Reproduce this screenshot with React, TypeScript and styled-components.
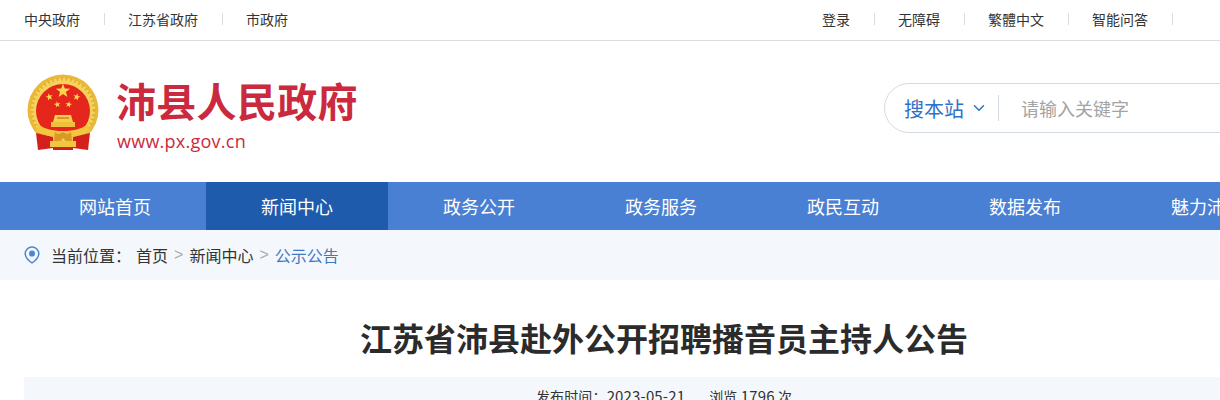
import React from 'react';
import styled, { createGlobalStyle } from 'styled-components';
import { ChevronDown } from 'lucide-react';

const GlobalStyle = createGlobalStyle`
  html, body {
    margin: 0;
    padding: 0;
    width: 1220px;
    height: 400px;
    overflow: hidden;
    background: #fff;
    font-family: "Noto Sans CJK SC", "Liberation Sans", sans-serif;
    color: #333;
  }
`;

const Page = styled.div`
  width: 1328px;
`;

const TopBar = styled.div`
  display: flex;
  justify-content: space-between;
  align-items: center;
  box-sizing: border-box;
  width: 1220px;
  height: 41px;
  padding: 0 47px 2px 24px;
  border-bottom: 1px solid #d9dce0;
`;

const TopLinks = styled.div`
  display: flex;
  align-items: center;
`;

const TopLink = styled.a<{ $divided?: boolean }>`
  display: flex;
  align-items: center;
  font-size: 14px;
  line-height: 20px;
  color: #333;
  &::after {
    content: '';
    width: 1px;
    height: 12px;
    margin: 0 23px 0 24px;
    background: ${(props) => (props.$divided ? '#d9dce0' : 'transparent')};
  }
  &:last-child::after {
    margin-right: 0;
  }
`;

const Masthead = styled.header`
  display: flex;
  justify-content: space-between;
  align-items: center;
  box-sizing: border-box;
  width: 1280px;
  margin-left: 24px;
  height: 141px;
`;

const Brand = styled.div`
  display: flex;
  align-items: center;
  gap: 17px;
  padding-left: 3px;
`;

const EmblemSvg = styled.svg`
  filter: blur(0.35px);
`;

const BrandText = styled.div`
  display: flex;
  flex-direction: column;
  padding-top: 5px;
  color: #cb2a3e;
`;

const BrandName = styled.div`
  font-size: 40px;
  font-weight: 700;
  line-height: 50px;
  letter-spacing: 0.3px;
`;

const BrandUrl = styled.div`
  margin: 3px 0 0 1px;
  font-family: "Open Sans", sans-serif;
  font-size: 18px;
  line-height: 26px;
  letter-spacing: 0.25px;
`;

const SearchBox = styled.form`
  display: flex;
  align-items: center;
  box-sizing: border-box;
  width: 420px;
  height: 50px;
  margin-top: -7px;
  padding-left: 19px;
  border: 1px solid #d5dbe3;
  border-radius: 25px;
`;

const SearchScope = styled.div`
  display: flex;
  align-items: center;
  gap: 6px;
  height: 26px;
  padding-right: 10px;
  border-right: 1px solid #d5dbe3;
  font-size: 20px;
  color: #2f72c8;
`;

const SearchInput = styled.input`
  flex: 1;
  min-width: 0;
  margin-left: 22px;
  padding: 0;
  border: 0;
  outline: 0;
  background: transparent;
  font: 18px "Noto Sans CJK SC", sans-serif;
  &::placeholder {
    color: #a3a3a3;
    opacity: 1;
  }
`;

const Nav = styled.nav`
  display: flex;
  box-sizing: border-box;
  width: 1328px;
  height: 48px;
  padding-left: 24px;
  background: #4a80d3;
`;

const NavItem = styled.a<{ $active?: boolean }>`
  flex: 0 0 182px;
  text-align: center;
  font-size: 18px;
  line-height: 48px;
  color: #fff;
  background: ${(props) => (props.$active ? '#1f5bac' : 'transparent')};
`;

const Crumbs = styled.div`
  display: flex;
  align-items: center;
  box-sizing: border-box;
  width: 1328px;
  height: 50px;
  padding-left: 24px;
  background: #f4f8fc;
  font-size: 16px;
`;

const CrumbLabel = styled.span`
  margin: 0 5px 0 11px;
`;

const CrumbSep = styled.span`
  margin: 0 6px;
  color: #a9a9a9;
  font-family: "Liberation Sans", sans-serif;
`;

const CrumbCurrent = styled.span`
  color: #3f79c4;
`;

const Article = styled.main`
  width: 1280px;
  margin-left: 24px;
`;

const Title = styled.h1`
  margin: 0;
  padding-top: 33px;
  text-align: center;
  font-size: 32px;
  font-weight: 700;
  line-height: 48px;
  color: #2b2b2b;
`;

const Meta = styled.div`
  display: flex;
  justify-content: center;
  gap: 24px;
  height: 50px;
  margin-top: 16px;
  padding-top: 9px;
  background: #f4f8fc;
  font-size: 14px;
  line-height: 20px;
  letter-spacing: 0.15px;
`;

const MetaNum = styled.span`
  font-size: 15px;
`;

// 国徽
const Emblem = () => {
  const star = (cx: number, cy: number, r: number, rot = 0) => {
    const pts = [];
    for (let i = 0; i < 10; i++) {
      const rad = i % 2 === 0 ? r : r * 0.4;
      const a = ((i * 36 - 90 + rot) * Math.PI) / 180;
      pts.push(`${(cx + rad * Math.cos(a)).toFixed(2)},${(cy + rad * Math.sin(a)).toFixed(2)}`);
    }
    return <polygon points={pts.join(' ')} fill="#fbd84a" />;
  };
  return (
    <EmblemSvg width="72" height="78" viewBox="0 0 72 78">
      <circle cx="36" cy="37" r="35.5" fill="#e9b93a" />
      <circle cx="36" cy="37" r="32" fill="#f5d25a" />
      <circle cx="36" cy="37" r="31" fill="none" stroke="#e2a92e" strokeWidth="3" strokeDasharray="1.5 3" />
      <circle cx="36" cy="38" r="27" fill="#e4261c" />
      {star(36, 18, 7.5)}
      {star(22.3, 24, 3.8, -15)}
      {star(49.7, 24, 3.8, 15)}
      {star(30.3, 31.5, 3.4, -10)}
      {star(41.7, 31.5, 3.4, 10)}
      <path d="M9 60 L26 64 L26 75 L11 77 Z" fill="#d4201c" />
      <path d="M63 60 L46 64 L46 75 L61 77 Z" fill="#d4201c" />
      <path d="M28 42h16l2 7h-20z" fill="#f4cd4d" />
      <rect x="30" y="44" width="12" height="2" fill="#d9962a" />
      <rect x="24" y="49" width="24" height="5" fill="#efbf3e" />
      <path d="M11 51 C19 57 27 58 36 58 C45 58 53 57 61 51 L63 58 C54 63 45 64 36 64 C27 64 18 63 9 58 Z" fill="#f3c63f" />
      <path d="M28 59 C31 62 33 61 36 59 C39 61 41 62 44 59 L45 68 C41 69 38 68 36 65 C34 68 31 69 27 68 Z" fill="#d99a24" />
      <rect x="23" y="68" width="26" height="6" fill="#f3c63f" />
      <rect x="26" y="74" width="20" height="3" fill="#d4201c" />
    </EmblemSvg>
  );
};

const PinIcon = () => (
  <svg width="16" height="18" viewBox="0 0 16 18" fill="none">
    <path
      d="M8 1C4.2 1 1.2 4 1.2 7.6 1.2 11.4 5 15 8 17 11 15 14.8 11.4 14.8 7.6 14.8 4 11.8 1 8 1Z"
      stroke="#4f86d0"
      strokeWidth="1.5"
    />
    <circle cx="8" cy="7.6" r="3" fill="#4f86d0" />
  </svg>
);

const navItems = ['网站首页', '新闻中心', '政务公开', '政务服务', '政民互动', '数据发布', '魅力沛县'];

const App = () => {
  return (
    <Page>
      <GlobalStyle />
      <TopBar>
        <TopLinks>
          <TopLink $divided>中央政府</TopLink>
          <TopLink $divided>江苏省政府</TopLink>
          <TopLink>市政府</TopLink>
        </TopLinks>
        <TopLinks>
          <TopLink $divided>登录</TopLink>
          <TopLink $divided>无障碍</TopLink>
          <TopLink $divided>繁體中文</TopLink>
          <TopLink $divided>智能问答</TopLink>
        </TopLinks>
      </TopBar>
      <Masthead>
        <Brand>
          <Emblem />
          <BrandText>
            <BrandName>沛县人民政府</BrandName>
            <BrandUrl>www.px.gov.cn</BrandUrl>
          </BrandText>
        </Brand>
        <SearchBox>
          <SearchScope>
            搜本站
            <ChevronDown size={18} strokeWidth={2} color="#2f72c8" />
          </SearchScope>
          <SearchInput placeholder="请输入关键字" />
        </SearchBox>
      </Masthead>
      <Nav>
        {navItems.map((item) => (
          <NavItem key={item} $active={item === '新闻中心'}>{item}</NavItem>
        ))}
      </Nav>
      <Crumbs>
        <PinIcon />
        <CrumbLabel>当前位置：</CrumbLabel>
        <span>首页</span>
        <CrumbSep>&gt;</CrumbSep>
        <span>新闻中心</span>
        <CrumbSep>&gt;</CrumbSep>
        <CrumbCurrent>公示公告</CrumbCurrent>
      </Crumbs>
      <Article>
        <Title>江苏省沛县赴外公开招聘播音员主持人公告</Title>
        <Meta>
          <span>发布时间：<MetaNum>2023-05-21</MetaNum></span>
          <span>浏览 <MetaNum>1796</MetaNum> 次</span>
        </Meta>
      </Article>
    </Page>
  );
};

export default App;
